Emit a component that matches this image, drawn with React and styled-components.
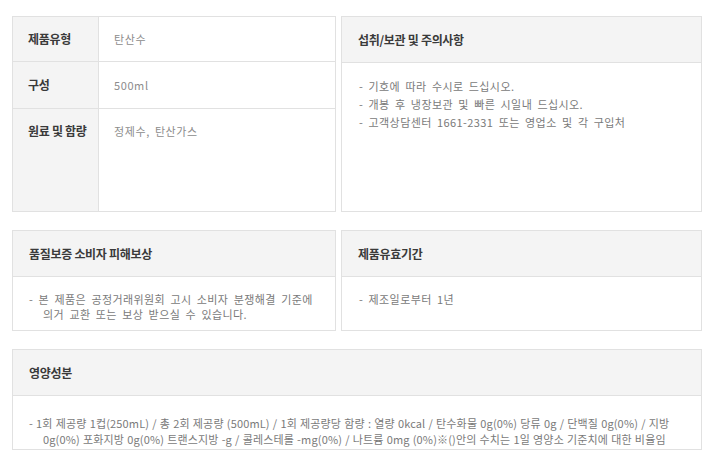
import React from "react";
import styled, { createGlobalStyle } from "styled-components";

const Global = createGlobalStyle`
  html, body { margin: 0; padding: 0; background: #fff; }
  body { font-family: "Noto Sans CJK KR", "Noto Sans", sans-serif; }
`;

const Page = styled.div`
  width: 690px;
  padding: 16px 12px 12px;
  display: flex;
  flex-direction: column;
  gap: 18px;
`;

const Row = styled.div`
  display: grid;
  grid-template-columns: 324px 361px;
  column-gap: 5px;
`;

const Box = styled.section`
  border: 1px solid #e1e1e1;
  display: flex;
  flex-direction: column;
  background: #fff;
  min-height: ${(p) => p.$min || 0}px;
  box-sizing: border-box;
`;

const SpecRow = styled.div`
  display: grid;
  grid-template-columns: 86px 1fr;
  box-sizing: border-box;
  height: ${(p) => p.$h}px;
  border-bottom: ${(p) => (p.$last ? "none" : "1px solid #e1e1e1")};
`;

const Label = styled.div`
  background: #f4f4f4;
  border-right: 1px solid #e1e1e1;
  padding: ${(p) => (p.$top ? "14px 0 0 15px" : "0 0 0 15px")};
  display: flex;
  align-items: ${(p) => (p.$top ? "flex-start" : "center")};
  font-size: 12px;
  font-weight: 700;
  color: #3a3a3a;
  line-height: 16px;
  letter-spacing: -0.3px;
`;

const Value = styled.div`
  padding: ${(p) => (p.$top ? "14px 0 0 15px" : "0 0 0 15px")};
  display: flex;
  align-items: ${(p) => (p.$top ? "flex-start" : "center")};
  font-size: 11px;
  color: #8c8c8c;
  line-height: 16px;
  letter-spacing: 0.6px;
  word-spacing: 2px;
`;

const Head = styled.h3`
  margin: 0;
  height: ${(p) => p.$h || 46}px;
  box-sizing: border-box;
  background: #f4f4f4;
  border-bottom: 1px solid #e1e1e1;
  padding: 0 16px;
  display: flex;
  align-items: center;
  font-size: 12px;
  font-weight: 700;
  color: #3a3a3a;
  letter-spacing: -0.3px;
`;

const Body = styled.div`
  flex: 1;
  padding: ${(p) => p.$pad || "15px 16px 0"};
  font-size: 11px;
  color: #7a7a7a;
  line-height: ${(p) => p.$lh || 15}px;
  letter-spacing: 0.4px;
  word-spacing: 2.5px;
`;

const List = styled.ul`
  margin: 0;
  padding: 0;
  list-style: none;
`;

const Item = styled.li`
  padding-left: 14px;
  text-indent: -14px;
`;

const Line = styled.span`
  display: block;
  white-space: nowrap;
  padding-left: ${(p) => (p.$indent ? 14 : 0)}px;
  letter-spacing: 0.15px;
  word-spacing: 0.5px;
`;

export default function App() {
  return (
    <>
      <Global />
      <Page>
        <Row>
          <Box>
            <SpecRow $h={45}>
              <Label>제품유형</Label>
              <Value>탄산수</Value>
            </SpecRow>
            <SpecRow $h={47}>
              <Label>구성</Label>
              <Value>500ml</Value>
            </SpecRow>
            <SpecRow $h={102} $last>
              <Label $top>원료 및 함량</Label>
              <Value $top>정제수, 탄산가스</Value>
            </SpecRow>
          </Box>
          <Box>
            <Head>섭취/보관 및 주의사항</Head>
            <Body $pad="14px 17px 0" $lh={18}>
              <List>
                <Item>- 기호에 따라 수시로 드십시오.</Item>
                <Item>- 개봉 후 냉장보관 및 빠른 시일내 드십시오.</Item>
                <Item>- 고객상담센터 1661-2331 또는 영업소 및 각 구입처</Item>
              </List>
            </Body>
          </Box>
        </Row>
        <Row>
          <Box $min={101}>
            <Head>품질보증 소비자 피해보상</Head>
            <Body>
              <List>
                <Item>
                  - 본 제품은 공정거래위원회 고시 소비자 분쟁해결 기준에
                  <br />
                  의거 교환 또는 보상 받으실 수 있습니다.
                </Item>
              </List>
            </Body>
          </Box>
          <Box $min={101}>
            <Head>제품유효기간</Head>
            <Body $pad="15px 17px 0">
              <List>
                <Item>- 제조일로부터 1년</Item>
              </List>
            </Body>
          </Box>
        </Row>
        <Box $min={101}>
          <Head>영양성분</Head>
          <Body $pad="19px 16px 0" $lh={16}>
            <Line>
              - 1회 제공량 1컵(250mL) / 총 2회 제공량 (500mL) / 1회 제공량당 함량 : 열량 0kcal / 탄수화물 0g(0%) 당류 0g / 단백질 0g(0%) / 지방
            </Line>
            <Line $indent>
              0g(0%) 포화지방 0g(0%) 트랜스지방 -g / 콜레스테롤 -mg(0%) / 나트륨 0mg (0%)※()안의 수치는 1일 영양소 기준치에 대한 비율임
            </Line>
          </Body>
        </Box>
      </Page>
    </>
  );
}
